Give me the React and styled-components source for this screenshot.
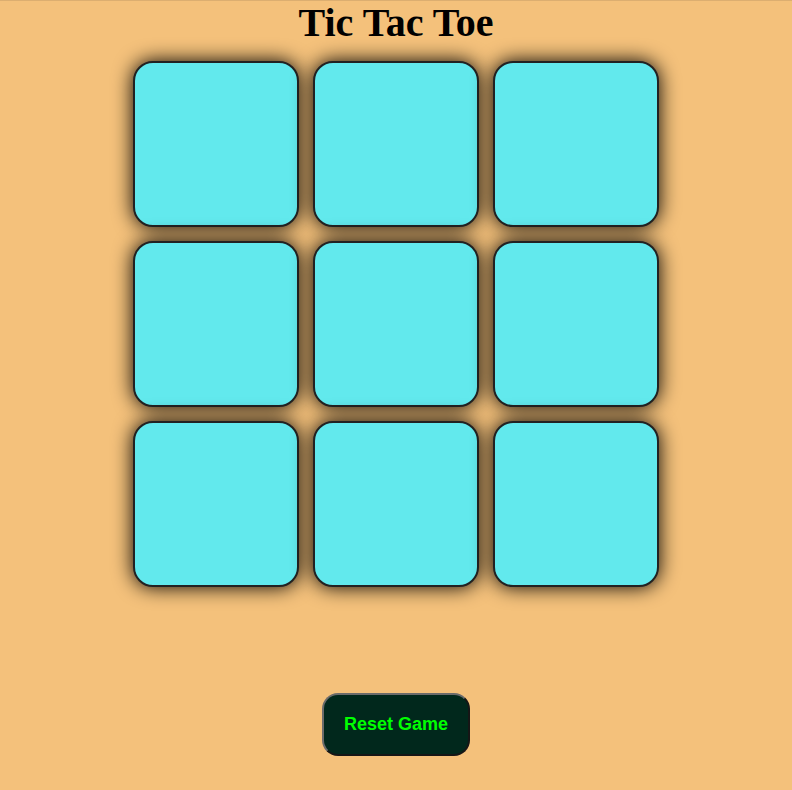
import React, { useState } from "react";
import styled, { createGlobalStyle } from "styled-components";

const GlobalStyle = createGlobalStyle`
  html, body {
    margin: 0;
    padding: 0;
  }

  body {
    background: #f4c17b;
    border-top: 1px solid #dcae70;
    font-family: "Liberation Serif", "Times New Roman", serif;
  }
`;

const Page = styled.div`
  display: flex;
  flex-direction: column;
  align-items: center;
  text-align: center;
`;

const Title = styled.h1`
  margin: -1px 0 0;
  color: #000;
  font-family: "Liberation Serif", "Times New Roman", serif;
  font-size: 40px;
  font-weight: 700;
  line-height: 46px;
`;

const Board = styled.div`
  display: grid;
  grid-template-columns: repeat(3, 166px);
  grid-auto-rows: 166px;
  gap: 14px;

  margin-top: 15px;
`;

const Cell = styled.button`
  box-sizing: border-box;
  width: 100%;
  height: 100%;

  border: 2px solid #222;
  border-radius: 20px;
  background: #62e9ed;
  box-shadow: 0 0 20px #000;

  color: #000;
  font-family: "Liberation Serif", "Times New Roman", serif;
  font-size: 96px;
  cursor: pointer;
`;

const ResetButton = styled.button`
  box-sizing: border-box;
  width: 148px;
  height: 63px;

  margin-top: 106px;

  border: 2px outset #6b6b6b;
  border-radius: 16px;
  background: #01281c;

  color: #00ff00;
  font-family: "Liberation Sans", Arial, sans-serif;
  font-size: 18px;
  font-weight: 700;
  cursor: pointer;
`;

const App = () => {
  const [cells, setCells] = useState(Array(9).fill(""));
  const [turn, setTurn] = useState("O");

  const play = (i) => {
    if (cells[i]) return;
    const next = [...cells];
    next[i] = turn;
    setCells(next);
    setTurn(turn === "O" ? "X" : "O");
  };

  const reset = () => {
    setCells(Array(9).fill(""));
    setTurn("O");
  };

  return (
    <>
      <GlobalStyle />
      <Page>
        <Title>Tic Tac Toe</Title>
        <Board>
          {cells.map((c, i) => (
            <Cell key={i} onClick={() => play(i)}>
              {c}
            </Cell>
          ))}
        </Board>
        <ResetButton onClick={reset}>Reset Game</ResetButton>
      </Page>
    </>
  );
};

export default App;
